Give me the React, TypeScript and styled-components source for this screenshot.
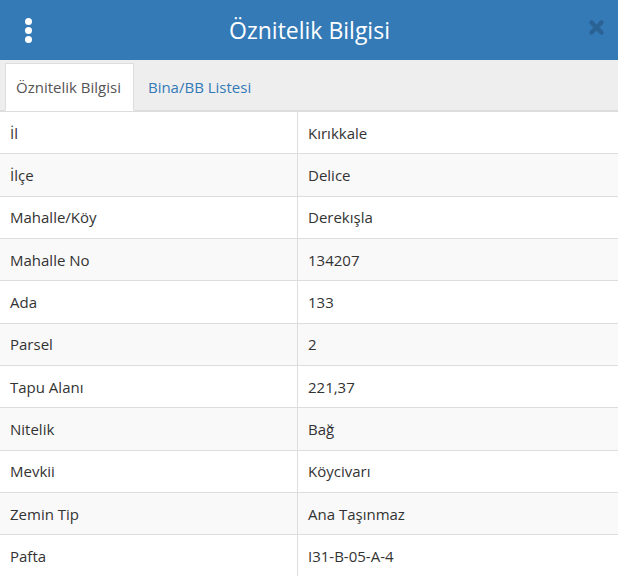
import styled, { createGlobalStyle } from 'styled-components';

const GlobalStyle = createGlobalStyle`
  html, body {
    margin: 0;
    padding: 0;
    background: #fff;
  }
  body {
    font-family: 'Open Sans', 'Liberation Sans', sans-serif;
    color: #333;
  }
`;

const Panel = styled.div`
  width: 618px;
  height: 576px;
  overflow: hidden;
  background: #fff;
`;

const Header = styled.header`
  height: 60px;
  background: #337ab7;
  display: flex;
  align-items: center;
  justify-content: space-between;
  padding: 0 13px 0 20px;
  box-sizing: border-box;
`;

const Title = styled.h1`
  margin: 0;
  flex: 1;
  text-align: center;
  font-size: 23px;
  font-weight: 400;
  color: #fff;
  padding-right: 4px;
`;

const MenuButton = styled.button`
  width: 16px;
  height: 30px;
  padding: 0;
  border: none;
  background: none;
  display: flex;
  flex-direction: column;
  align-items: center;
  justify-content: center;
  gap: 2px;
`;

const Dot = styled.span`
  width: 7px;
  height: 7px;
  border-radius: 50%;
  background: #fff;
`;

const CloseButton = styled.button`
  width: 18px;
  padding: 0;
  margin-bottom: 5px;
  border: none;
  background: none;
  display: flex;
  align-items: center;
  justify-content: center;
`;

const TabBar = styled.nav`
  height: 51px;
  background: #eee;
  border-bottom: 1px solid #ddd;
  box-sizing: border-box;
  display: flex;
  align-items: flex-end;
  gap: 3px;
  padding-left: 5px;
`;

const Tab = styled.div<{ $active?: boolean }>`
  height: 48px;
  box-sizing: border-box;
  padding: 0 12px 1px 10px;
  display: flex;
  align-items: center;
  font-size: 15px;
  margin-bottom: -1px;
  border: 1px solid ${(p) => (p.$active ? '#ddd' : 'transparent')};
  border-bottom-color: ${(p) => (p.$active ? '#fff' : 'transparent')};
  background: ${(p) => (p.$active ? '#fff' : 'transparent')};
  color: ${(p) => (p.$active ? '#555' : '#337ab7')};
`;

const List = styled.div`
  display: flex;
  flex-direction: column;
  font-size: 15px;
  border-top: 1px solid #ddd;
`;

const Row = styled.div`
  height: 42.33px;
  flex-shrink: 0;
  box-sizing: border-box;
  display: grid;
  grid-template-columns: 298px 1fr;
  border-bottom: 1px solid #ddd;

  &:nth-child(even) {
    background: #f9f9f9;
  }
`;

const Cell = styled.div`
  padding: 0 10px;
  display: flex;
  align-items: center;

  &:first-child {
    border-right: 1px solid #ddd;
  }
`;

const rows: [string, string][] = [
  ['İl', 'Kırıkkale'],
  ['İlçe', 'Delice'],
  ['Mahalle/Köy', 'Derekışla'],
  ['Mahalle No', '134207'],
  ['Ada', '133'],
  ['Parsel', '2'],
  ['Tapu Alanı', '221,37'],
  ['Nitelik', 'Bağ'],
  ['Mevkii', 'Köycivarı'],
  ['Zemin Tip', 'Ana Taşınmaz'],
  ['Pafta', 'I31-B-05-A-4'],
];

const App = () => {
  return (
    <Panel>
      <GlobalStyle />
      <Header>
        <MenuButton aria-label="Menü">
          <Dot />
          <Dot />
          <Dot />
        </MenuButton>
        <Title>Öznitelik Bilgisi</Title>
        <CloseButton aria-label="Kapat">
          <svg width="17" height="17" viewBox="0 0 17 17">
            <path d="M3.5 3.5 L13.5 13.5 M13.5 3.5 L3.5 13.5" stroke="#2a6296" strokeWidth="4.5" strokeLinecap="round" />
          </svg>
        </CloseButton>
      </Header>
      <TabBar>
        <Tab $active>Öznitelik Bilgisi</Tab>
        <Tab>Bina/BB Listesi</Tab>
      </TabBar>
      <List>
        {rows.map(([label, value]) => (
          <Row key={label}>
            <Cell>{label}</Cell>
            <Cell>{value}</Cell>
          </Row>
        ))}
      </List>
    </Panel>
  );
};

export default App;
